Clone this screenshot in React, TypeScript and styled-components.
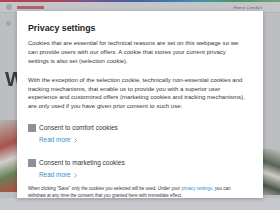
import React from 'react'
import styled, { createGlobalStyle } from 'styled-components'

const GlobalStyle = createGlobalStyle`
  html, body {
    margin: 0;
    padding: 0;
  }

  body {
    width: 280px;
    height: 210px;
    overflow: hidden;
    font-family: "Liberation Sans", Arial, sans-serif;
  }
`

const Screen = styled.div`
  position: relative;
  width: 280px;
  height: 210px;
  overflow: hidden;
  background: #dcdddf;
`

/* blurred page behind the dialog */

const Page = styled.div`
  display: flex;
  flex-direction: column;
  height: 100%;
  filter: blur(0.7px);
`

const Stripe = styled.div`
  height: 2px;
  background: linear-gradient(
    90deg,
    #c4444f 0%,
    #b9465f 20%,
    #7c5b9d 32%,
    #4c64a8 46%,
    #3f88bb 62%,
    #45a4b2 74%,
    #4f9f6b 84%,
    #7ab47e 100%
  );
`

const Header = styled.header`
  display: flex;
  align-items: center;
  gap: 5px;
  height: 10px;
  padding: 0 18px 0 6px;
  background: #d8d9db;
  border-bottom: 1px solid #c4c5c7;
`

const HeaderIcon = styled.div`
  width: 6px;
  height: 6px;
  border-radius: 50%;
  background: #b5b6b8;
`

const Logo = styled.div`
  width: 27px;
  height: 3px;
  background: #c9666b;
`

const HeaderLink = styled.div`
  margin-left: auto;
  font-size: 4.4px;
  color: #76777a;
`

const Main = styled.main`
  flex: 1;
  display: flex;
  flex-direction: column;
  padding: 8px 0 0;
  background: #d0d1d3;
`

const SideIcon = styled.div`
  width: 5px;
  height: 5px;
  margin-left: 6px;
  border-radius: 50%;
  background: #b4b5b7;
`

const HeroTitle = styled.h1`
  margin: 43px 0 0 5px;
  font-size: 21px;
  line-height: 20px;
  font-weight: 700;
  color: #3b3c3e;
`

const Photos = styled.div`
  display: flex;
  justify-content: space-between;
  align-items: flex-end;
  margin-top: auto;
`

const Photo = styled.div<{ $h: number; $top: number; $bg: string }>`
  width: 18px;
  height: ${p => p.$h}px;
  margin-bottom: ${p => p.$top}px;
  background: ${p => p.$bg};
`

const Band = styled.div`
  height: 12px;
  background: #dbdcde;
`

const Overlay = styled.div`
  position: absolute;
  inset: 0;
  background: rgba(60, 60, 64, 0.12);
`

/* dialog */

const Modal = styled.section`
  position: absolute;
  left: 17px;
  top: 11px;
  width: 246px;
  height: 187px;
  box-sizing: border-box;
  padding: 12px 8px 0 11px;
  background: #fff;
  overflow: hidden;
  box-shadow: 0 1px 4px rgba(0, 0, 0, 0.25);
`

const Title = styled.h2`
  margin: 0;
  font-size: 8.8px;
  line-height: 11px;
  font-weight: 700;
  color: #1d1e20;
`

const Text = styled.p<{ $gap: number }>`
  margin: ${p => p.$gap}px 0 0;
  font-size: 6.05px;
  line-height: 8.8px;
  color: #36373a;
  white-space: nowrap;
`

const ConsentRow = styled.label<{ $gap: number }>`
  display: flex;
  align-items: center;
  gap: 3px;
  margin-top: ${p => p.$gap}px;
`

const Box = styled.span`
  width: 8px;
  height: 8px;
  background: #8b9197;
`

const ConsentLabel = styled.span`
  font-size: 6.5px;
  line-height: 8px;
  color: #333436;
`

const ReadMore = styled.a`
  display: flex;
  align-items: center;
  gap: 3px;
  margin: 4px 0 0 11px;
  font-size: 6.4px;
  line-height: 8px;
  color: #3390d0;
  text-decoration: none;
`

const Note = styled.p`
  margin: 5.5px 0 0;
  font-size: 4.5px;
  line-height: 7px;
  color: #333436;
  white-space: nowrap;
`

const NoteLink = styled.a`
  color: #3390d0;
  text-decoration: none;
`

const Chevron = () => (
  <svg width="3" height="5" viewBox="0 0 3 5">
    <polyline points="0.5,0.5 2.5,2.5 0.5,4.5" fill="none" stroke="#3390d0" strokeWidth="0.7" />
  </svg>
)

const consents = [
  { id: 'comfort', label: 'Consent to comfort cookies', gap: 13 },
  { id: 'marketing', label: 'Consent to marketing cookies', gap: 15 }
]

const App = () => {
  return (
    <Screen>
      <GlobalStyle />
      <Page>
        <Stripe />
        <Header>
          <HeaderIcon />
          <Logo />
          <HeaderLink>Home Comfort</HeaderLink>
        </Header>
        <Main>
          <SideIcon />
          <HeroTitle>W</HeroTitle>
          <Photos>
            <Photo
              $h={72}
              $top={6}
              $bg="linear-gradient(160deg, #c9c4c0 0%, #b7574f 35%, #e6e2dc 55%, #6f8a5a 75%, #c94b43 100%)"
            />
            <Photo
              $h={46}
              $top={3}
              $bg="linear-gradient(200deg, #d9d8d4 0%, #5d6a58 35%, #e3e1dc 55%, #4f5a4c 80%, #b9b7b1 100%)"
            />
          </Photos>
        </Main>
        <Band />
      </Page>
      <Overlay />

      <Modal>
        <Title>Privacy settings</Title>
        <Text $gap={5}>
          Cookies that are essential for technical reasons are set on this webpage so we
          <br />
          can provide users with our offers. A cookie that stores your current privacy
          <br />
          settings is also set (selection cookie).
        </Text>
        <Text $gap={10.5}>
          With the exception of the selection cookie, technically non-essential cookies and
          <br />
          tracking mechanisms, that enable us to provide you with a superior user
          <br />
          experience and customized offers (marketing cookies and tracking mechanisms),
          <br />
          are only used if you have given prior consent to such use:
        </Text>
        {consents.map(c => (
          <React.Fragment key={c.id}>
            <ConsentRow $gap={c.gap}>
              <Box />
              <ConsentLabel>{c.label}</ConsentLabel>
            </ConsentRow>
            <ReadMore href="#">
              Read more
              <Chevron />
            </ReadMore>
          </React.Fragment>
        ))}
        <Note>
          When clicking "Save" only the cookies you selected will be used. Under your{' '}
          <NoteLink href="#">privacy settings</NoteLink>, you can
          <br />
          withdraw at any time the consent that you granted here with immediate effect.
        </Note>
      </Modal>
    </Screen>
  )
}

export default App
